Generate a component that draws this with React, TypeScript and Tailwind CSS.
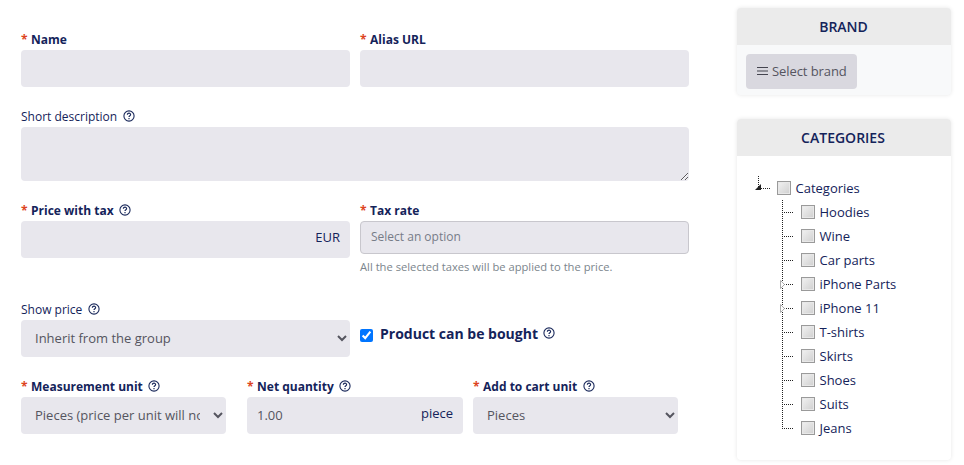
import React from 'react';

const categories = [
  { name: 'Hoodies', nested: false },
  { name: 'Wine', nested: false },
  { name: 'Car parts', nested: false },
  { name: 'iPhone Parts', nested: true },
  { name: 'iPhone 11', nested: true },
  { name: 'T-shirts', nested: false },
  { name: 'Skirts', nested: false },
  { name: 'Shoes', nested: false },
  { name: 'Suits', nested: false },
  { name: 'Jeans', nested: false },
];

const HelpIcon = () => (
  <svg className="mb-px ml-[5.5px] size-[12px] shrink-0" viewBox="0 0 12 12" fill="none" stroke="#1b2a5c">
    <circle cx="6" cy="6" r="5.1" strokeWidth="1.1" />
    <path d="M4.4 4.8c0-2.2 3.3-2.1 3.2 0C7.5 5.8 6.1 5.7 6 7" strokeWidth="1.2" />
    <path d="M6 8v1.2" strokeWidth="1.2" />
  </svg>
);

type LabelProps = { text: string; required?: boolean; help?: boolean };

const Label = ({ text, required, help }: LabelProps) => (
  <label className={required ? 'flex h-[21px] items-center text-[12px] font-bold' : 'flex h-[21px] items-center text-[12px]'}>
    {required && <span className="mr-[3.5px] text-[#dd4422]">*</span>}
    <span>{text}</span>
    {help && <HelpIcon />}
  </label>
);

const Select = ({ value }: { value: string }) => (
  <select className="block h-[37px] w-full rounded-[4px] bg-[#e8e7ed] px-[10px] pb-[2px] text-[13px] text-[#55555f]">
    <option>{value}</option>
  </select>
);

const TreeCheckbox = () => (
  <span className="size-[14px] shrink-0 border border-[#9a9a9a] bg-linear-to-tl from-[#cfcfcf] to-[#f2f2f2] shadow-[inset_0_0_0_1px_#e8e8e8]" />
);

const App = () => {
  return (
    <div className="flex h-[465px] gap-12 overflow-hidden bg-white pl-[21px] font-['Open_Sans','Noto_Sans',sans-serif] text-[13px] text-[#14235a]">
      <form className="flex w-[668px] flex-col gap-[19px] pt-[29px]">
        <div className="grid grid-cols-2 gap-[10px]">
          <div>
            <Label text="Name" required />
            <input className="block h-[37px] w-full rounded-[4px] bg-[#e8e7ed]" />
          </div>
          <div>
            <Label text="Alias URL" required />
            <input className="block h-[37px] w-full rounded-[4px] bg-[#e8e7ed]" />
          </div>
        </div>

        <div>
          <Label text="Short description" help />
          <textarea className="block h-[54px] w-full rounded-[4px] bg-[#e8e7ed]" />
        </div>

        <div className="grid h-20 grid-cols-2 gap-[10px]">
          <div>
            <Label text="Price with tax" required help />
            <div className="flex h-[37px] items-center justify-end rounded-[4px] bg-[#e8e7ed] pr-[10px] pb-[4px]">EUR</div>
          </div>
          <div>
            <Label text="Tax rate" required />
            <div className="flex h-[33px] items-center rounded-[4px] border border-[#c8c7cd] bg-[#e8e7ed] px-[10px] pb-[2px] text-[12px] text-[#777c88]">
              Select an option
            </div>
            <p className="mt-1 text-[11.2px] leading-[18px] text-[#7b858c]">All the selected taxes will be applied to the price.</p>
          </div>
        </div>

        <div className="grid grid-cols-2 gap-[10px]">
          <div>
            <Label text="Show price" help />
            <Select value="Inherit from the group" />
          </div>
          <div className="flex items-center gap-[7px] pt-[11px]">
            <input type="checkbox" defaultChecked className="mt-[3px] size-[13px]" />
            <span className="flex items-center text-[14px] font-bold">
              Product can be bought
              <HelpIcon />
            </span>
          </div>
        </div>

        <div className="flex">
          <div className="w-[205px]">
            <Label text="Measurement unit" required help />
            <Select value="Pieces (price per unit will not be shown)" />
          </div>
          <div className="ml-[21px] w-[216px]">
            <Label text="Net quantity" required help />
            <div className="flex h-[37px] items-center justify-between rounded-[4px] bg-[#e8e7ed] px-[10px]">
              <span className="text-[#55555f]">1.00</span>
              <span className="pb-[3px]">piece</span>
            </div>
          </div>
          <div className="ml-[10px] w-[205px]">
            <Label text="Add to cart unit" required help />
            <Select value="Pieces" />
          </div>
        </div>
      </form>

      <aside className="flex w-[214px] flex-col gap-6 pt-2">
        <section className="h-[87px] rounded-[4px] bg-[#f8f9fa] shadow-[0_0_4px_rgba(0,0,0,0.1)]">
          <h3 className="flex h-[37px] items-center justify-center rounded-t-[4px] bg-[#ebebeb] pr-px text-[14px] font-semibold">BRAND</h3>
          <div className="p-[9px]">
            <button className="flex h-[35px] w-[111px] items-center rounded-[4px] bg-[#d9d8df] pl-[11px] text-[#55555f]">
              <svg className="mr-1 mb-[2px] h-[8px] w-[11px]" viewBox="0 0 11 8" fill="#44444f">
                <path d="M0 0h11v1H0zM0 3.5h11v1H0zM0 7h11v1H0z" />
              </svg>
              <span className="tracking-[-0.08px]">Select brand</span>
            </button>
          </div>
        </section>

        <section className="h-[341px] rounded-[4px] bg-white shadow-[0_0_4px_rgba(0,0,0,0.1)]">
          <h3 className="flex h-[37px] items-center justify-center rounded-t-[4px] bg-[#ebebeb] pr-[2px] text-[14px] font-semibold">CATEGORIES</h3>
          <div className="pt-5 pl-[18px]">
            <div className="flex h-6 items-center">
              <svg className="mr-[7px] h-6 w-[15px]" viewBox="0 0 15 24">
                <path d="M3.5 0v12M6 12.5h9" stroke="#222" strokeDasharray="1 1" />
                <path d="M6 8v6H0z" fill="#222" />
              </svg>
              <TreeCheckbox />
              <span className="ml-[4.5px] pt-[2px]">Categories</span>
            </div>
            {categories.map((category, index) => (
              <div key={category.name} className="flex h-6 items-center pl-[24px]">
                <svg className="mr-[7px] h-6 w-[15px]" viewBox="0 0 15 24">
                  <path
                    d={index === categories.length - 1 ? 'M3.5 0v12M3 12.5h12' : 'M3.5 0v24M3 12.5h12'}
                    stroke="#222"
                    strokeDasharray="1 1"
                  />
                  {category.nested && <path d="M1.5 8.5v8l4-4z" fill="#fff" stroke="#aaa" />}
                </svg>
                <TreeCheckbox />
                <span className="ml-[4.5px] pt-[2px]">{category.name}</span>
              </div>
            ))}
          </div>
        </section>
      </aside>
    </div>
  );
};

export default App;
